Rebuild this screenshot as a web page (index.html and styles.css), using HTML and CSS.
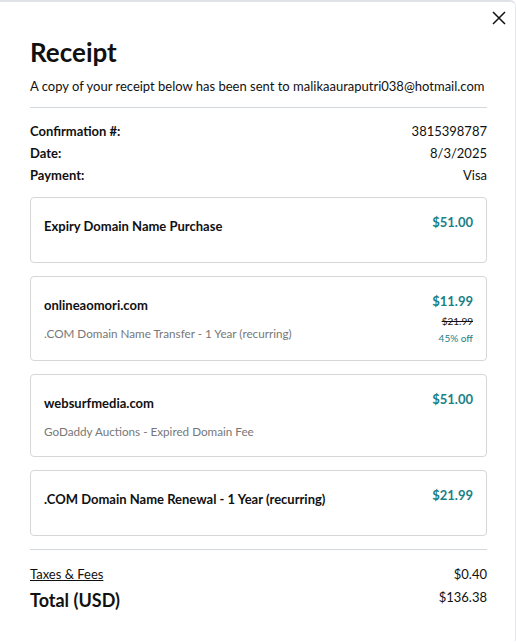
FILE: index.html
```html
<!DOCTYPE html>
<html lang="en">
<head>
  <meta charset="UTF-8" />
  <meta name="viewport" content="width=device-width, initial-scale=1.0"/>
  <title>Receipt</title>
  <link rel="stylesheet" href="styles.css">
</head>
<body>

  <div class="modal">
    <button class="close-btn" aria-label="Close">
      <svg width="14" height="14" viewBox="0 0 14 14">
        <path d="M1 1L13 13M13 1L1 13" stroke="#111" stroke-width="1.5" fill="none"/>
      </svg>
    </button>

    <h1>Receipt</h1>
    <p class="sent-note">A copy of your receipt below has been sent to malikaauraputri038@hotmail.com</p>

    <hr class="divider" />

    <div class="meta">
      <div class="meta-row"><span class="meta-label">Confirmation #:</span><span>3815398787</span></div>
      <div class="meta-row"><span class="meta-label">Date:</span><span>8/3/2025</span></div>
      <div class="meta-row"><span class="meta-label">Payment:</span><span>Visa</span></div>
    </div>

    <div class="items">
      <div class="item">
        <div class="item-info">
          <div class="item-title">Expiry Domain Name Purchase</div>
        </div>
        <div class="item-price">
          <div class="price">$51.00</div>
        </div>
      </div>

      <div class="item">
        <div class="item-info">
          <div class="item-title">onlineaomori.com</div>
          <div class="item-sub">.COM Domain Name Transfer - 1 Year (recurring)</div>
        </div>
        <div class="item-price">
          <div class="price">$11.99</div>
          <div class="price-old">$21.99</div>
          <div class="price-off">45% off</div>
        </div>
      </div>

      <div class="item">
        <div class="item-info">
          <div class="item-title">websurfmedia.com</div>
          <div class="item-sub">GoDaddy Auctions - Expired Domain Fee</div>
        </div>
        <div class="item-price">
          <div class="price">$51.00</div>
        </div>
      </div>

      <div class="item">
        <div class="item-info">
          <div class="item-title">.COM Domain Name Renewal - 1 Year (recurring)</div>
        </div>
        <div class="item-price">
          <div class="price">$21.99</div>
        </div>
      </div>
    </div>

    <hr class="divider" />

    <div class="totals">
      <div class="total-row">
        <a href="#" class="taxes-link">Taxes &amp; Fees</a>
        <span>$0.40</span>
      </div>
      <div class="total-row grand">
        <span class="grand-label">Total (USD)</span>
        <span class="grand-amount">$136.38</span>
      </div>
    </div>
  </div>

</body>
</html>
```

FILE: styles.css
```css
/* Reset + Font */
body {
  margin: 0;
  font-family: Lato, 'Liberation Sans', sans-serif;
  background: #ffffff;
  color: #111111;
}

.modal {
  position: relative;
  min-height: 641px;
  padding: 34px 28px 0 30px;
  border-top: 2px solid #dfe3e8;
  border-right: 1px solid #e6e9ed;
  border-top-right-radius: 6px;
  box-sizing: border-box;
}

.close-btn {
  position: absolute;
  top: 6px;
  right: 6px;
  width: 20px;
  height: 20px;
  padding: 0;
  border: none;
  background: none;
  display: flex;
  align-items: center;
  justify-content: center;
  cursor: pointer;
}

h1 {
  margin: 0;
  font-size: 26px;
  line-height: 32px;
  font-weight: 700;
}

.sent-note {
  margin: 8px 0 0;
  font-size: 13px;
  line-height: 20px;
}

.divider {
  margin: 11px 0 0;
  border: none;
  border-top: 1px solid #d4d9dd;
}

.meta {
  margin-top: 12px;
  font-size: 13px;
  line-height: 22px;
}

.meta-row,
.total-row {
  display: flex;
  justify-content: space-between;
}

.meta-label {
  font-weight: 700;
}

.items {
  display: flex;
  flex-direction: column;
  gap: 13px;
  margin: 11px 0 13px;
}

.item {
  display: flex;
  justify-content: space-between;
  padding: 16px 13px;
  border: 1px solid #d6d6d6;
  border-radius: 4px;
}

.item-title {
  margin: 4px 0 12px;
  font-size: 13px;
  line-height: 16px;
  font-weight: 700;
}

.item-sub {
  font-size: 11.7px;
  line-height: 17px;
  color: #777777;
}

.item-price {
  text-align: right;
}

.price {
  font-size: 13px;
  line-height: 16px;
  font-weight: 700;
  color: #1b7f86;
}

.price-old {
  margin-top: 6px;
  font-size: 10px;
  line-height: 12px;
  text-decoration: line-through;
}

.price-off {
  margin-top: 5px;
  font-size: 10px;
  line-height: 12px;
  color: #1b7f86;
}

.totals {
  margin-top: 14px;
  font-size: 13px;
  line-height: 20px;
}

.taxes-link {
  color: #111111;
  text-decoration: underline;
}

.total-row.grand {
  align-items: flex-start;
  margin-top: 3px;
}

.grand-label {
  font-size: 18px;
  line-height: 26px;
  font-weight: 700;
}
```
